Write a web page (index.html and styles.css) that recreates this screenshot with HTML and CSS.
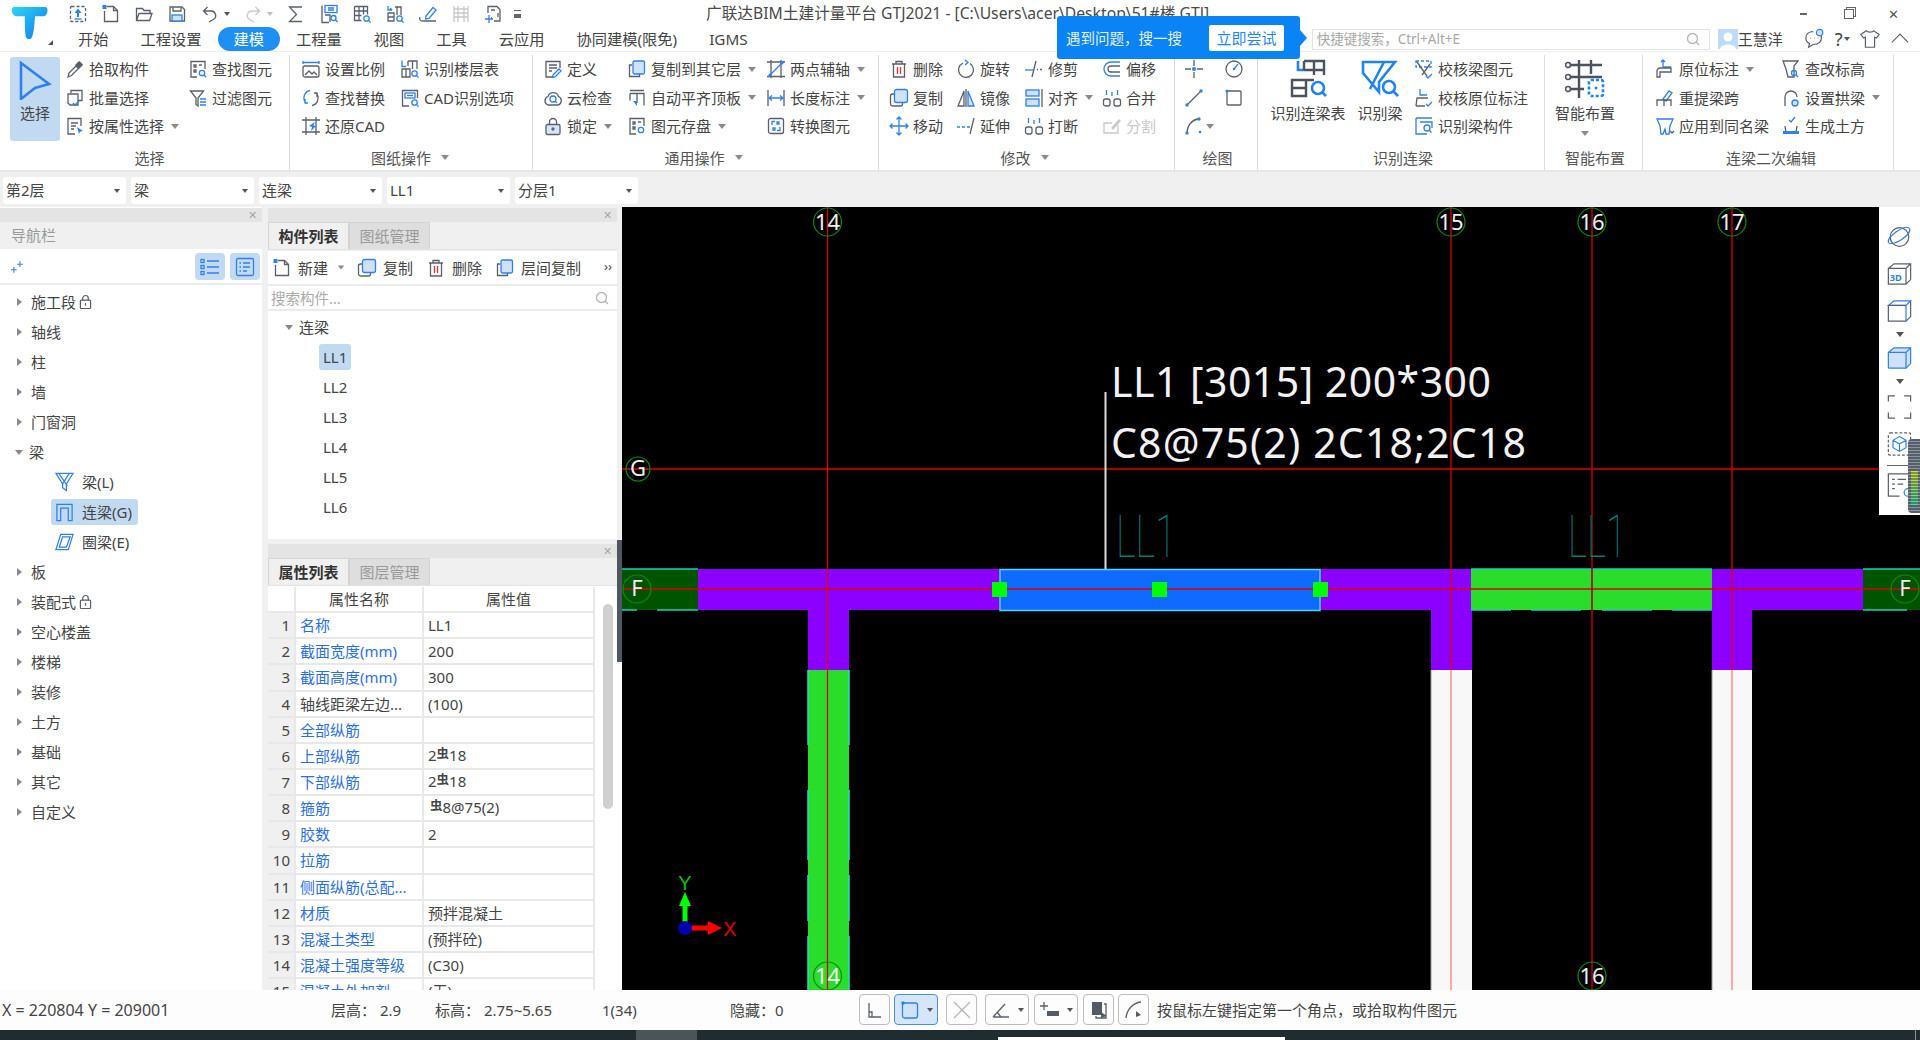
FILE: index.html
```html
<!DOCTYPE html>
<html lang="zh-CN">
<head>
  <meta charset="UTF-8">
  <title>广联达BIM土建计量平台 GTJ2021</title>
  <link rel="stylesheet" href="styles.css">
</head>
<body>
  <!-- shared icons -->
  <svg class="defs" width="0" height="0">
    <defs>
      <linearGradient id="logo-grad" x1="0" y1="0" x2="1" y2="1">
        <stop offset="0" stop-color="#2fd6f0"/>
        <stop offset="1" stop-color="#0a78ee"/>
      </linearGradient>
      <symbol id="up" viewBox="0 0 20 20"><rect class="g dash" x="2.500" y="2.500" width="15" height="15" rx="1"/><path class="bf" d="M10 4.500l3.500 4.500H11v4H9V9H6.500z"/><path class="b" d="M6.500 15h7"/></symbol>
      <symbol id="new" viewBox="0 0 20 20"><path class="g" d="M6 2.500h6.500l4 4v11h-13V7"/><path class="g" d="M12.500 2.500v4h4"/><rect class="bf" x="1.500" y="1" width="4" height="4"/></symbol>
      <symbol id="open" viewBox="0 0 20 20"><path class="g" d="M2.500 16.500v-12h6l1.500 2h6v3M2.500 16.500l2.500-7h13l-2.500 7z"/></symbol>
      <symbol id="save" viewBox="0 0 20 20"><path class="g" d="M3 3h12l2.500 2.500V17H3z"/><path class="g" d="M6 3.500v3.500h8V3.500"/><rect class="f" x="5" y="11" width="10" height="6"/></symbol>
      <symbol id="undo" viewBox="0 0 20 20"><path class="g" d="M7.500 3L3.500 7l4 4M3.500 7h7.500a4.500 4.500 0 0 1 3 8L9 18"/></symbol>
      <symbol id="redo" viewBox="0 0 20 20"><path class="off" d="M12.500 3l4 4-4 4M16.500 7H9a4.500 4.500 0 0 0-3 8l5 3"/></symbol>
      <symbol id="sigma" viewBox="0 0 20 20"><path class="g" d="M16 3H3.500l7 7.500-7 7H16"/></symbol>
      <symbol id="sheet-q" viewBox="0 0 20 20"><path class="g" d="M3 1.500v17h7"/><rect class="b" x="6" y="1.500" width="12" height="7"/><path class="b" d="M9 4h6M9 6h6"/><path class="g" d="M6 11h5v7"/><circle class="b" cx="14.500" cy="14" r="2.500"/><path class="b" d="M16.300 15.800l2.200 2.200"/></symbol>
      <symbol id="grid-q" viewBox="0 0 20 20"><path class="g" d="M2.500 2.500h13v8M2.500 2.500v14h7M2.500 7h13M2.500 11.500h7M7 2.500v14M11.500 2.500v8"/><circle class="b" cx="14.500" cy="14.500" r="2.700"/><path class="b" d="M16.400 16.400l2.200 2.200"/></symbol>
      <symbol id="grid2-q" viewBox="0 0 20 20"><path class="g" d="M10 3h6v8M3 9h6v8H3zM12 3v8M3 13h6"/><path class="b" d="M3 2v4h4M7 6l-2-2"/><circle class="b" cx="14.500" cy="14.500" r="2.700"/><path class="b" d="M16.400 16.400l2.200 2.200"/></symbol>
      <symbol id="pen" viewBox="0 0 20 20"><path class="b" d="M8 12l7-8.500 3 2.500-7 8.500-3.500.5z"/><path class="g" d="M2 13c-1 2 0 4 3 4h13"/></symbol>
      <symbol id="rail" viewBox="0 0 20 20"><path class="off" d="M3 2v16M17 2v16M3 5h14M3 9h14M3 13h14M7 2v16M13 2v16"/></symbol>
      <symbol id="addsel" viewBox="0 0 20 20"><path class="g" d="M4 9V2.500h9l3 3V17h-6"/><path class="g" d="M7 6h4M14 9v4M8 14h-1"/><path class="b" d="M5 11v8M1 15h8"/></symbol>
      <symbol id="pick" viewBox="0 0 20 20"><path class="g" d="M3 18l1-4 7-7 2.500 2.500-7 7z"/><path class="gf" d="M10 6l4-4 1 .5 2.500 2.500.5 1-4 4z"/></symbol>
      <symbol id="batch" viewBox="0 0 20 20"><path class="g" d="M6 5V2.500h11v10h-4"/><path class="g" d="M3 6h10v11H5l-2-2z"/><path class="b" d="M8 15l2 2 4-4"/></symbol>
      <symbol id="attr" viewBox="0 0 20 20"><path class="g" d="M10 18H3V2.500h13V10"/><path class="g" d="M6 7h7M6 10h5M6 13h3"/><path class="bf" d="M12 11l6 4-3 .8L14 18z"/></symbol>
      <symbol id="find" viewBox="0 0 20 20"><path class="g" d="M9 18H3V2.500h14V10"/><path class="g" d="M6 6h2v2H6zM11 6h3M6 11h2v2H6z"/><circle class="b" cx="14" cy="14" r="2.700"/><path class="b" d="M16 16l2.200 2.200"/></symbol>
      <symbol id="filter" viewBox="0 0 20 20"><path class="g" d="M2.500 3h13L10 10v8l-2-1.500V10z"/><path class="b" d="M12 11h6M12 14h6M12 17h6"/></symbol>
      <symbol id="scale" viewBox="0 0 20 20"><path class="b" d="M2 2v3M18 2v3M2 3.500h16"/><rect class="g" x="2" y="7" width="16" height="11" rx="2"/><path class="g" d="M4 16l4-4 3 3 2-2 3 3"/></symbol>
      <symbol id="floors" viewBox="0 0 20 20"><path class="b" d="M2 1.500v6h4"/><path class="g" d="M8 2h9v8M12.500 2v8M8 2v5M2 10h8v8H2zM6 10v8"/><circle class="b" cx="14.500" cy="14.500" r="2.700"/><path class="b" d="M16.400 16.400l2.200 2.200"/></symbol>
      <symbol id="replace" viewBox="0 0 20 20"><path class="b" d="M9 2.500A7.500 7.500 0 0 0 5 15M4 11v4h3"/><path class="g" d="M11 17.500A7.500 7.500 0 0 0 15 5M16 9V5h-3"/></symbol>
      <symbol id="cad" viewBox="0 0 20 20"><path class="g" d="M9 18H2.500V2.500h15V10"/><rect class="b" x="5" y="5" width="10" height="5"/><path class="b" d="M7 7.500h6"/><circle class="b" cx="14.500" cy="14.500" r="2.700"/><path class="b" d="M16.400 16.400l2.200 2.200"/></symbol>
      <symbol id="restore" viewBox="0 0 20 20"><path class="g" d="M5 1v18M15 1v18M1 4h18M1 16h18"/><path class="bf" d="M14 6l-6 4 3 1-1 4 5-5-2.500-.5z"/></symbol>
      <symbol id="define" viewBox="0 0 20 20"><path class="g" d="M9 18H3V2.500h14V9"/><path class="g" d="M6 6h8M6 9h8M6 12h3"/><path class="b" d="M10 16l6-6 2 2-6 6-2.500.5z"/></symbol>
      <symbol id="cloud" viewBox="0 0 20 20"><path class="g" d="M5 17a4.500 4.500 0 0 1 0-8.500A5.500 5.500 0 0 1 15.500 8.500 4.500 4.500 0 0 1 15 17z"/><circle class="b" cx="10" cy="11" r="3"/><path class="b" d="M12 13l2 2"/></symbol>
      <symbol id="lock" viewBox="0 0 20 20"><rect class="lockf" x="3" y="8.500" width="14" height="10" rx="1.500"/><path class="g" d="M6.500 8.500V6a3.500 3.500 0 0 1 7 0v2.500"/><circle class="g" cx="10" cy="13" r="1"/></symbol>
      <symbol id="copy" viewBox="0 0 20 20"><path class="g" d="M5 6H2.500v11.500h10V15"/><rect class="f" x="6" y="2" width="11.500" height="13" rx="1.500"/></symbol>
      <symbol id="align-top" viewBox="0 0 20 20"><path class="g" d="M3 2.500h14M3 5.500h14v12M3 5.500v7M10 6v9"/><path class="bf" d="M6 13l4 5 0-5z"/></symbol>
      <symbol id="store" viewBox="0 0 20 20"><path class="g" d="M9 18H3V2.500h14V10M6 6h2v2H6zM11 6h3M6 11h2v2H6z"/><circle class="b" cx="14" cy="14" r="2.700"/></symbol>
      <symbol id="twopt" viewBox="0 0 20 20"><path class="g" d="M5 1v18M15 1v18M1 17.500h18M1 3h18"/><path class="b" d="M2 18L18 2"/><circle class="bf" cx="4" cy="16" r="1.500"/><circle class="bf" cx="16" cy="4" r="1.500"/></symbol>
      <symbol id="dim" viewBox="0 0 20 20"><path class="g" d="M2 2v16M18 2v16"/><path class="b" d="M3 10h14M6 7.500L3 10l3 2.500M14 7.500l3 2.500-3 2.500"/></symbol>
      <symbol id="convert" viewBox="0 0 20 20"><rect class="g" x="2.500" y="2.500" width="15" height="15" rx="2"/><path class="b" d="M6 9V5.500h3M14 11v3.500h-3M7 12h2v2H7zM11 6h2v2h-2z"/></symbol>
      <symbol id="trash" viewBox="0 0 20 20"><path class="g" d="M3 5h14M7 5V2.500h6V5M4.500 5v13h11V5"/><path class="r" d="M8.500 8v7M11.500 8v7"/></symbol>
      <symbol id="rotate" viewBox="0 0 20 20"><path class="g" d="M7 4a7.500 7.500 0 1 0 7 .5"/><path class="b" d="M9 1l3 2.500L9 6"/></symbol>
      <symbol id="trim" viewBox="0 0 20 20"><path class="b" d="M1 11h9"/><path class="g" d="M12 2L8 18M13 10.500h1M16 10.500h2"/></symbol>
      <symbol id="offset" viewBox="0 0 20 20"><path class="b" d="M18 3H9a7 7 0 0 0 0 14h9"/><path class="g" d="M18 7H9a3 3 0 0 0 0 6h9"/></symbol>
      <symbol id="dup" viewBox="0 0 20 20"><rect class="g" x="1.500" y="6" width="12" height="12" rx="2"/><rect class="f" x="5.500" y="1.500" width="13" height="13" rx="2"/></symbol>
      <symbol id="mirror" viewBox="0 0 20 20"><path class="g" d="M8 3L2 18h6z"/><path class="f" d="M12 3l6 15h-6z"/><path class="g" d="M10 1v18"/></symbol>
      <symbol id="alignr" viewBox="0 0 20 20"><path class="g" d="M18 1v18"/><rect class="f" x="2" y="2" width="13" height="6"/><rect class="f" x="2" y="11" width="13" height="7"/></symbol>
      <symbol id="merge" viewBox="0 0 20 20"><rect class="g" x="1.500" y="11" width="6.500" height="7" rx="2"/><rect class="g" x="12" y="11" width="6.500" height="7" rx="2"/><path class="b" d="M4.500 2v5M15.500 2v5M10 4v4"/></symbol>
      <symbol id="move" viewBox="0 0 20 20"><path class="b" d="M10 1v18M1 10h18M7.500 3.500L10 1l2.500 2.500M7.500 16.500L10 19l2.500-2.500M3.500 7.500L1 10l2.500 2.500M16.500 7.500L19 10l-2.500 2.500"/></symbol>
      <symbol id="extend" viewBox="0 0 20 20"><path class="b" d="M1 11h3M6 11h3M11 11h3"/><path class="g" d="M18 2l-4 16"/></symbol>
      <symbol id="split" viewBox="0 0 20 20"><path class="off" d="M16 9v8H2V7h8M10 12l7-8 1 1-7 8z"/></symbol>
      <symbol id="cross" viewBox="0 0 20 20"><path class="g" d="M10 1v6M10 13v6M1 10h6M13 10h6"/><circle class="bf" cx="10" cy="10" r="2"/></symbol>
      <symbol id="gauge" viewBox="0 0 20 20"><circle class="g" cx="10" cy="10" r="8"/><path class="b" d="M10 10l4-5"/><circle class="bf" cx="10" cy="10" r="1.300"/></symbol>
      <symbol id="line" viewBox="0 0 20 20"><path class="g" d="M3 17L17 3"/><circle class="bf" cx="3" cy="17" r="1.700"/><circle class="bf" cx="17" cy="3" r="1.700"/></symbol>
      <symbol id="rect" viewBox="0 0 20 20"><rect class="g" x="3" y="3" width="14" height="14" rx="1"/><circle class="bf" cx="3" cy="3" r="1.600"/></symbol>
      <symbol id="arc" viewBox="0 0 20 20"><path class="g" d="M3 18C3 9 8 4 14 3"/><circle class="bf" cx="3" cy="17" r="1.700"/><circle class="bf" cx="15" cy="3" r="1.700"/><circle class="bf" cx="16" cy="16" r="1.300"/></symbol>
      <symbol id="beam-chk" viewBox="0 0 20 20"><rect class="b dash" x="2" y="2" width="15" height="6"/><path class="g" d="M3 3l10 14M16 5L8 16"/><path class="b" d="M12 17l2 2 4-4"/></symbol>
      <symbol id="orig-chk" viewBox="0 0 20 20"><path class="b" d="M6 1v6h7"/><path class="g" d="M2 18l1-8h11M2 18h9"/><path class="b" d="M12 16l2 2 4-4"/></symbol>
      <symbol id="beam-id" viewBox="0 0 20 20"><path class="b" d="M2 2h16M2 2v16h11M6 6h12v6"/><circle class="b" cx="13" cy="12" r="3"/><path class="b" d="M15 14l2.500 2.500"/></symbol>
      <symbol id="orig" viewBox="0 0 20 20"><path class="b" d="M8 1v7h8M6 3l2-2 2 2"/><path class="g" d="M2 18V11l2-2h12v4H5v5z"/></symbol>
      <symbol id="elev" viewBox="0 0 20 20"><path class="g" d="M2 2h15l-4 5v11H7L5 10z"/><circle class="b" cx="13" cy="14" r="2.500"/><path class="b" d="M15 16l2 2"/></symbol>
      <symbol id="respan" viewBox="0 0 20 20"><path class="b" d="M8 11l6-8 3 2-6 8z"/><path class="g" d="M2 18v-6h14v6M9 12v6"/></symbol>
      <symbol id="arch" viewBox="0 0 20 20"><path class="g" d="M4 18V9a6 6 0 0 1 12 0"/><circle class="f" cx="14" cy="15" r="3"/></symbol>
      <symbol id="apply" viewBox="0 0 20 20"><path class="b" d="M2 3h16l-3 7-1 8h-3l-1-5-2 5H6L5 10z"/><path class="g" d="M15 15l2 2 2-2"/></symbol>
      <symbol id="earth" viewBox="0 0 20 20"><path class="b" d="M8 4l2 2 4-5"/><path class="g" d="M4 10l1 7h10l1-7"/><path class="bf" d="M2 15h16v3H2z"/></symbol>
      <symbol id="chat" viewBox="0 0 24 24"><path class="g" d="M10 4C5 4 2 7 2 11c0 3 2 5 4 6l-1 4 5-3c6 0 9-3 9-7 0-1 0-2-.500-3"/><circle class="f" cx="17" cy="5" r="3.500"/><path class="g" d="M7 11h.5M11 11h.5M15 11h.5"/></symbol>
      <symbol id="shirt" viewBox="0 0 24 24"><path class="g" d="M8 3l-6 4 3 4 2-1v11h10V10l2 1 3-4-6-4c-1 2-7 2-8 0z"/></symbol>
      <symbol id="search" viewBox="0 0 16 16"><circle class="mute" cx="7.500" cy="7.500" r="5"/><path class="mute" d="M11 11l3 3"/></symbol>
      <symbol id="sparkle" viewBox="0 0 16 16"><path class="b" d="M11 1v7M7.500 4.500h7M3.500 8v7M0 11.500h7"/></symbol>
      <symbol id="list-a" viewBox="0 0 20 20"><path class="b" d="M7 4h12M7 10h12M7 16h12"/><rect class="b" x="1" y="2.500" width="3" height="3"/><rect class="b" x="1" y="8.500" width="3" height="3"/><rect class="b" x="1" y="14.500" width="3" height="3"/></symbol>
      <symbol id="list-b" viewBox="0 0 20 20"><rect class="b" x="1.500" y="1.500" width="17" height="17" rx="1.500"/><path class="b" d="M4.500 6h1.500M8 6h7M4.500 10h1.500M8 10h7M4.500 14h1.500M8 14h4"/></symbol>
      <symbol id="padlock" viewBox="0 0 14 16"><rect class="g" x="1.500" y="6" width="11" height="9" rx="1"/><path class="g" d="M4 6V4a3 3 0 0 1 6 0v2M7 9v3"/></symbol>
      <symbol id="beam-l" viewBox="0 0 20 20"><path class="b" d="M1 1h18l-7 11v7l-4-3v-4zM4 1l9 13M8 12l7-11"/></symbol>
      <symbol id="beam-g" viewBox="0 0 20 20"><path class="b" d="M2 19V2h16v17h-4V6H6v13z"/></symbol>
      <symbol id="beam-e" viewBox="0 0 20 20"><path class="b" d="M6 2h13l-5 16H1zM8 4.500h8L12 15.500H4.500z"/></symbol>
      <symbol id="big-table" viewBox="0 0 40 40"><path class="bold-b" d="M10 2v9h6"/><path class="bold-g" d="M16 2h20v14M26 2v14M16 2v9M16 11h20M4 21h14v16H4zM18 21h8M4 29h14"/><circle class="bold-b" cx="30" cy="29" r="6"/><path class="bold-b" d="M34 33l4 4"/></symbol>
      <symbol id="big-beam" viewBox="0 0 40 40"><path class="bold-b" d="M3 3h32l-16 20v10L3 14zM24 3L10 30"/><circle class="bold-b" cx="29" cy="28" r="6"/><path class="bold-b" d="M33 32l5 5"/></symbol>
      <symbol id="big-smart" viewBox="0 0 40 40"><path class="bold-g" d="M3 6h34M3 18h34M3 30h16M14 1v38M26 1v14"/><circle class="dot" cx="3" cy="6" r="2.500"/><circle class="dot" cx="3" cy="18" r="2.500"/><circle class="dot" cx="3" cy="30" r="2.500"/><rect class="bold-b dash" x="24" y="21" width="14" height="16" rx="2"/><circle class="bf" cx="31" cy="29" r="1.500"/></symbol>
      <symbol id="big-select" viewBox="0 0 40 40"><path class="arrow" d="M6 3l28 21-14 4-14 11z"/></symbol>
      <symbol id="v-orbit" viewBox="0 0 28 28"><circle class="g" cx="14" cy="14" r="10"/><path class="b" d="M2 20c-1-3 3-8 9-12s12-6 14-3"/><path class="b" d="M2 20c2 2 8 1 14-3s10-9 9-12"/></symbol>
      <symbol id="v-3d" viewBox="0 0 28 28"><path class="g" d="M2 8l6-5h18v17l-5 5H2zM2 8h19v17M21 8l5-5"/><text class="v-3d-text" x="3.500" y="22">3D</text></symbol>
      <symbol id="v-cube" viewBox="0 0 28 28"><path class="g" d="M2 8v17h19l5-5V3"/><path class="b" d="M2 8l6-5h18l-5 5zM21 8v17"/><path class="g" d="M2 8h19"/></symbol>
      <symbol id="v-cubef" viewBox="0 0 28 28"><path class="f" d="M2 8l6-5h18v17l-5 5H3a1 1 0 0 1-1-1z"/><path class="b" d="M2 8h19v17M21 8l5-5"/></symbol>
      <symbol id="v-full" viewBox="0 0 28 28"><path class="g" d="M2 8V2h7M19 2h7v6M26 20v6h-7M9 26H2v-6"/></symbol>
      <symbol id="v-box" viewBox="0 0 28 28"><rect class="g dash" x="2" y="2" width="24" height="24" rx="2"/><path class="b" d="M14 6l7 4v8l-7 4-7-4v-8zM7 10l7 4 7-4M14 14v8"/></symbol>
      <symbol id="v-note" viewBox="0 0 28 28"><path class="g" d="M14 26H2V2h24v14M6 8h3M12 8h9M6 13h3M12 13h6M6 18h3"/><circle class="b" cx="23" cy="22" r="4"/></symbol>
      <symbol id="s-ortho" viewBox="0 0 20 20"><path class="g" d="M4 3v14h12M4 12h3v5"/></symbol>
      <symbol id="s-rect" viewBox="0 0 20 20"><rect class="f" x="2.500" y="3" width="15" height="15" rx="2"/><circle class="bf" cx="3" cy="3" r="1.800"/></symbol>
      <symbol id="s-x" viewBox="0 0 20 20"><path class="mute" d="M2 2l16 16M18 2L2 18"/></symbol>
      <symbol id="s-angle" viewBox="0 0 20 20"><path class="g" d="M2 17h16M2 17L14 4M6 12l4 5"/></symbol>
      <symbol id="s-track" viewBox="0 0 20 20"><path class="g" d="M4 2v8M0 6h8"/><rect class="dark" x="7" y="11" width="12" height="5"/></symbol>
      <symbol id="s-layer" viewBox="0 0 20 20"><rect class="dark" x="3" y="2" width="10" height="13"/><path class="g" d="M15 4h2v14H7v-2"/><path class="dark" d="M12 12l6 4-6 2z"/></symbol>
      <symbol id="s-arc" viewBox="0 0 20 20"><path class="g" d="M2 18C3 9 9 3 17 2"/><path class="dark" d="M12 11l5 4-5 2z"/></symbol>
    </defs>
  </svg>

  <div class="app">
    <!-- Title + tabs -->
    <div class="header">
      <div class="logo-box">
        <svg class="logo" viewBox="0 0 40 38"><path fill="url(#logo-grad)" d="M3 2h34c3 0 3 9-2 10H26c-1 8-1 15-3 21-1 4-6 4-7 0-1-6-1-14-1-21H6C1 11 0 3 3 2z"/></svg>
        <i class="logo-corner"></i>
      </div>
      <div class="header-main">
        <div class="top-row">
          <svg class="qa"><use href="#up"/></svg>
          <svg class="qa"><use href="#new"/></svg>
          <svg class="qa"><use href="#open"/></svg>
          <svg class="qa"><use href="#save"/></svg>
          <svg class="qa"><use href="#undo"/></svg><i class="qa-caret"></i>
          <svg class="qa"><use href="#redo"/></svg><i class="qa-caret off-caret"></i>
          <svg class="qa"><use href="#sigma"/></svg>
          <svg class="qa"><use href="#sheet-q"/></svg>
          <svg class="qa"><use href="#grid-q"/></svg>
          <svg class="qa"><use href="#grid2-q"/></svg>
          <svg class="qa"><use href="#pen"/></svg>
          <svg class="qa"><use href="#rail"/></svg>
          <svg class="qa"><use href="#addsel"/></svg>
          <span class="qa-more"></span>
          <div class="app-title">广联达BIM土建计量平台 GTJ2021 - [C:\Users\acer\Desktop\51#楼.GTJ]</div>
          <div class="win-btns">
            <span class="win-btn"><i class="win-min"></i></span>
            <span class="win-btn"><i class="win-max"></i></span>
            <span class="win-btn win-close">✕</span>
          </div>
        </div>
        <div class="tab-row">
          <div class="tab">开始</div>
          <div class="tab">工程设置</div>
          <div class="tab active">建模</div>
          <div class="tab">工程量</div>
          <div class="tab">视图</div>
          <div class="tab">工具</div>
          <div class="tab">云应用</div>
          <div class="tab">协同建模(限免)</div>
          <div class="tab">IGMS</div>
          <div class="quick-search">
            <span>快捷键搜索，Ctrl+Alt+E</span>
            <svg class="qs-icon"><use href="#search"/></svg>
          </div>
          <div class="user">
            <svg class="avatar" viewBox="0 0 20 20"><rect width="20" height="20" fill="#bcdcf8"/><circle cx="10" cy="8" r="4.500" fill="#fff"/><path d="M2 20c1-6 15-6 16 0z" fill="#fff"/></svg>
            王慧洋
          </div>
          <svg class="head-ic"><use href="#chat"/></svg>
          <span class="help">?<i class="help-caret"></i></span>
          <svg class="head-ic"><use href="#shirt"/></svg>
          <i class="collapse"></i>
        </div>
      </div>
    </div>

    <div class="tip-bubble">
      <span>遇到问题，搜一搜</span>
      <span class="tip-btn">立即尝试</span>
    </div>

    <!-- Ribbon -->
    <div class="ribbon">
      <div class="rb-group g1">
        <div class="rb-body">
          <div class="big-btn select-btn"><svg class="ic-big"><use href="#big-select"/></svg>选择</div>
          <div class="rb-col c2">
            <div class="rb-item"><svg class="ic"><use href="#pick"/></svg>拾取构件</div>
            <div class="rb-item"><svg class="ic"><use href="#batch"/></svg>批量选择</div>
            <div class="rb-item"><svg class="ic"><use href="#attr"/></svg>按属性选择<i class="caret"></i></div>
          </div>
          <div class="rb-col">
            <div class="rb-item"><svg class="ic"><use href="#find"/></svg>查找图元</div>
            <div class="rb-item"><svg class="ic"><use href="#filter"/></svg>过滤图元</div>
          </div>
        </div>
        <div class="rb-label">选择</div>
      </div>

      <div class="rb-group g2">
        <div class="rb-body">
          <div class="rb-col c99">
            <div class="rb-item"><svg class="ic"><use href="#scale"/></svg>设置比例</div>
            <div class="rb-item"><svg class="ic"><use href="#replace"/></svg>查找替换</div>
            <div class="rb-item"><svg class="ic"><use href="#restore"/></svg>还原CAD</div>
          </div>
          <div class="rb-col">
            <div class="rb-item"><svg class="ic"><use href="#floors"/></svg>识别楼层表</div>
            <div class="rb-item"><svg class="ic"><use href="#cad"/></svg>CAD识别选项</div>
          </div>
        </div>
        <div class="rb-label">图纸操作<i class="caret"></i></div>
      </div>

      <div class="rb-group g3">
        <div class="rb-body">
          <div class="rb-col c84">
            <div class="rb-item"><svg class="ic"><use href="#define"/></svg>定义</div>
            <div class="rb-item"><svg class="ic"><use href="#cloud"/></svg>云检查</div>
            <div class="rb-item"><svg class="ic"><use href="#lock"/></svg>锁定<i class="caret"></i></div>
          </div>
          <div class="rb-col c139">
            <div class="rb-item"><svg class="ic"><use href="#copy"/></svg>复制到其它层<i class="caret"></i></div>
            <div class="rb-item"><svg class="ic"><use href="#align-top"/></svg>自动平齐顶板<i class="caret"></i></div>
            <div class="rb-item"><svg class="ic"><use href="#store"/></svg>图元存盘<i class="caret"></i></div>
          </div>
          <div class="rb-col">
            <div class="rb-item"><svg class="ic"><use href="#twopt"/></svg>两点辅轴<i class="caret"></i></div>
            <div class="rb-item"><svg class="ic"><use href="#dim"/></svg>长度标注<i class="caret"></i></div>
            <div class="rb-item"><svg class="ic"><use href="#convert"/></svg>转换图元</div>
          </div>
        </div>
        <div class="rb-label">通用操作<i class="caret"></i></div>
      </div>

      <div class="rb-group g4">
        <div class="rb-body">
          <div class="rb-col c67">
            <div class="rb-item"><svg class="ic"><use href="#trash"/></svg>删除</div>
            <div class="rb-item"><svg class="ic"><use href="#dup"/></svg>复制</div>
            <div class="rb-item"><svg class="ic"><use href="#move"/></svg>移动</div>
          </div>
          <div class="rb-col c68">
            <div class="rb-item"><svg class="ic"><use href="#rotate"/></svg>旋转</div>
            <div class="rb-item"><svg class="ic"><use href="#mirror"/></svg>镜像</div>
            <div class="rb-item"><svg class="ic"><use href="#extend"/></svg>延伸</div>
          </div>
          <div class="rb-col c78">
            <div class="rb-item"><svg class="ic"><use href="#trim"/></svg>修剪</div>
            <div class="rb-item"><svg class="ic"><use href="#alignr"/></svg>对齐<i class="caret"></i></div>
            <div class="rb-item"><svg class="ic"><use href="#merge"/></svg>打断</div>
          </div>
          <div class="rb-col">
            <div class="rb-item"><svg class="ic"><use href="#offset"/></svg>偏移</div>
            <div class="rb-item"><svg class="ic"><use href="#merge"/></svg>合并</div>
            <div class="rb-item disabled"><svg class="ic"><use href="#split"/></svg>分割</div>
          </div>
        </div>
        <div class="rb-label">修改<i class="caret"></i></div>
      </div>

      <div class="rb-group g5">
        <div class="rb-body">
          <div class="rb-col c40">
            <div class="rb-item"><svg class="ic"><use href="#cross"/></svg></div>
            <div class="rb-item"><svg class="ic"><use href="#line"/></svg></div>
            <div class="rb-item"><svg class="ic"><use href="#arc"/></svg><i class="caret arc-caret"></i></div>
          </div>
          <div class="rb-col">
            <div class="rb-item"><svg class="ic"><use href="#gauge"/></svg></div>
            <div class="rb-item"><svg class="ic"><use href="#rect"/></svg></div>
          </div>
        </div>
        <div class="rb-label">绘图</div>
      </div>

      <div class="rb-group g6">
        <div class="rb-body">
          <div class="big-btn w76"><svg class="ic-big"><use href="#big-table"/></svg>识别连梁表</div>
          <div class="big-btn w68"><svg class="ic-big"><use href="#big-beam"/></svg>识别梁</div>
          <div class="rb-col">
            <div class="rb-item"><svg class="ic"><use href="#beam-chk"/></svg>校核梁图元</div>
            <div class="rb-item"><svg class="ic"><use href="#orig-chk"/></svg>校核原位标注</div>
            <div class="rb-item"><svg class="ic"><use href="#beam-id"/></svg>识别梁构件</div>
          </div>
        </div>
        <div class="rb-label">识别连梁</div>
      </div>

      <div class="rb-group g7">
        <div class="rb-body">
          <div class="big-btn w80"><svg class="ic-big"><use href="#big-smart"/></svg>智能布置<i class="caret big-caret"></i></div>
        </div>
        <div class="rb-label">智能布置</div>
      </div>

      <div class="rb-group g8">
        <div class="rb-body">
          <div class="rb-col c126">
            <div class="rb-item"><svg class="ic"><use href="#orig"/></svg>原位标注<i class="caret"></i></div>
            <div class="rb-item"><svg class="ic"><use href="#respan"/></svg>重提梁跨</div>
            <div class="rb-item"><svg class="ic"><use href="#apply"/></svg>应用到同名梁</div>
          </div>
          <div class="rb-col">
            <div class="rb-item"><svg class="ic"><use href="#elev"/></svg>查改标高</div>
            <div class="rb-item"><svg class="ic"><use href="#arch"/></svg>设置拱梁<i class="caret"></i></div>
            <div class="rb-item"><svg class="ic"><use href="#earth"/></svg>生成土方</div>
          </div>
        </div>
        <div class="rb-label">连梁二次编辑</div>
      </div>
    </div>

    <!-- Combo row -->
    <div class="combo-row">
      <div class="combo">第2层</div>
      <div class="combo">梁</div>
      <div class="combo">连梁</div>
      <div class="combo">LL1</div>
      <div class="combo">分层1</div>
    </div>

    <div class="workspace">
      <!-- Navigation -->
      <div class="nav-panel">
        <div class="panel-strip"><span class="panel-x">✕</span></div>
        <div class="nav-title">导航栏</div>
        <div class="nav-tools">
          <svg class="sparkle"><use href="#sparkle"/></svg>
          <span class="nav-tool"><svg><use href="#list-a"/></svg></span>
          <span class="nav-tool"><svg><use href="#list-b"/></svg></span>
        </div>
        <ul class="nav-tree">
          <li class="nav-node"><i class="tri"></i>施工段<svg class="padlock"><use href="#padlock"/></svg></li>
          <li class="nav-node"><i class="tri"></i>轴线</li>
          <li class="nav-node"><i class="tri"></i>柱</li>
          <li class="nav-node"><i class="tri"></i>墙</li>
          <li class="nav-node"><i class="tri"></i>门窗洞</li>
          <li class="nav-node"><i class="tri-open"></i>梁</li>
          <li class="nav-leaf"><svg><use href="#beam-l"/></svg>梁(L)</li>
          <li class="nav-leaf selected"><svg><use href="#beam-g"/></svg>连梁(G)</li>
          <li class="nav-leaf"><svg><use href="#beam-e"/></svg>圈梁(E)</li>
          <li class="nav-node"><i class="tri"></i>板</li>
          <li class="nav-node"><i class="tri"></i>装配式<svg class="padlock"><use href="#padlock"/></svg></li>
          <li class="nav-node"><i class="tri"></i>空心楼盖</li>
          <li class="nav-node"><i class="tri"></i>楼梯</li>
          <li class="nav-node"><i class="tri"></i>装修</li>
          <li class="nav-node"><i class="tri"></i>土方</li>
          <li class="nav-node"><i class="tri"></i>基础</li>
          <li class="nav-node"><i class="tri"></i>其它</li>
          <li class="nav-node"><i class="tri"></i>自定义</li>
        </ul>
      </div>

      <!-- Component list + properties -->
      <div class="mid-panel">
        <div class="list-panel">
          <div class="panel-strip"><span class="panel-x">✕</span></div>
          <div class="panel-tabs">
            <div class="panel-tab active">构件列表</div>
            <div class="panel-tab">图纸管理</div>
          </div>
          <div class="list-tools">
            <svg class="ic"><use href="#new"/></svg><span class="tool-text">新建</span><i class="caret tool-caret"></i>
            <svg class="ic"><use href="#dup"/></svg><span class="tool-text">复制</span>
            <svg class="ic"><use href="#trash"/></svg><span class="tool-text">删除</span>
            <svg class="ic"><use href="#copy"/></svg><span class="tool-text">层间复制</span>
            <span class="tool-more">››</span>
          </div>
          <div class="list-search">
            <span>搜索构件...</span>
            <svg class="qs-icon"><use href="#search"/></svg>
          </div>
          <div class="list-tree">
            <div class="list-root"><i class="tri-open"></i>连梁</div>
            <div class="list-item"><span class="on">LL1</span></div>
            <div class="list-item"><span>LL2</span></div>
            <div class="list-item"><span>LL3</span></div>
            <div class="list-item"><span>LL4</span></div>
            <div class="list-item"><span>LL5</span></div>
            <div class="list-item"><span>LL6</span></div>
          </div>
        </div>

        <div class="prop-panel">
          <div class="panel-strip"><span class="panel-x">✕</span></div>
          <div class="panel-tabs">
            <div class="panel-tab active">属性列表</div>
            <div class="panel-tab">图层管理</div>
          </div>
          <div class="prop-body">
            <table class="prop-table">
              <thead>
                <tr><th class="num"></th><th class="name">属性名称</th><th class="val">属性值</th></tr>
              </thead>
              <tbody>
                <tr><td class="num">1</td><td class="link">名称</td><td>LL1</td></tr>
                <tr><td class="num">2</td><td class="link">截面宽度(mm)</td><td>200</td></tr>
                <tr><td class="num">3</td><td class="link">截面高度(mm)</td><td>300</td></tr>
                <tr><td class="num">4</td><td>轴线距梁左边...</td><td>(100)</td></tr>
                <tr><td class="num">5</td><td class="link">全部纵筋</td><td></td></tr>
                <tr><td class="num">6</td><td class="link">上部纵筋</td><td>2<span class="rebar">虫</span>18</td></tr>
                <tr><td class="num">7</td><td class="link">下部纵筋</td><td>2<span class="rebar">虫</span>18</td></tr>
                <tr><td class="num">8</td><td class="link">箍筋</td><td><span class="rebar first">虫</span>8@75(2)</td></tr>
                <tr><td class="num">9</td><td class="link">胶数</td><td>2</td></tr>
                <tr><td class="num">10</td><td class="link">拉筋</td><td></td></tr>
                <tr><td class="num">11</td><td class="link">侧面纵筋(总配...</td><td></td></tr>
                <tr><td class="num">12</td><td class="link">材质</td><td>预拌混凝土</td></tr>
                <tr><td class="num">13</td><td class="link">混凝土类型</td><td>(预拌砼)</td></tr>
                <tr><td class="num">14</td><td class="link">混凝土强度等级</td><td>(C30)</td></tr>
                <tr><td class="num">15</td><td class="link">混凝土外加剂</td><td>(无)</td></tr>
              </tbody>
            </table>
            <div class="prop-scroll"><div class="prop-thumb"></div></div>
          </div>
        </div>
      </div>

      <div class="splitter"><div class="splitter-grip"></div></div>

      <!-- Drawing canvas -->
      <div class="canvas">
        <svg class="drawing" viewBox="622 207 1298 784">
          <rect x="622" y="207" width="1298" height="784" fill="#000"/>
          <!-- columns below the beam -->
          <rect x="808" y="670" width="41" height="321" fill="#2bdd2b"/>
          <path d="M808 670V745M808 790V860M808 875V921M808 936V991M849 670V745M849 790V860M849 875V921M849 936V991" stroke="#22e0d0" stroke-width="1.500"/>
          <rect x="1431" y="670" width="41" height="321" fill="#f8f8f8"/>
          <rect x="1712" y="670" width="40" height="321" fill="#f8f8f8"/>
          <path d="M1431 670V991M1712 670V991" stroke="#999" stroke-width="1"/>
          <!-- beam -->
          <path d="M698 569H1999V610H1752V670H1712V610H1472V670H1431V610H849V670H808V610H698Z" fill="#8c00ff"/>
          <rect x="622" y="569" width="76" height="41" fill="#005400"/>
          <rect x="1863" y="569" width="57" height="41" fill="#005400"/>
          <rect x="1471" y="569" width="241" height="41" fill="#2bdd2b"/>
          <path d="M622 569H698M622 610H637M657 610H698M1863 569H1920M1863 610H1907M1471 569H1712M1471 610H1511M1531 610H1581M1602 610H1652M1672 610H1712" stroke="#18d0c0" stroke-width="1.500"/>
          <rect x="1000" y="569.500" width="320" height="41" fill="#0f6bff" stroke="#45d8ff" stroke-width="1.500"/>
          <!-- axis lines -->
          <g stroke="#dd0000" stroke-width="1.300">
            <path d="M622 589H1920"/>
            <path d="M622 469H1879"/>
            <path d="M827.500 207V991"/>
            <path d="M1451 207V670"/>
            <path d="M1732 207V670"/>
            <path d="M1592 207V991" stroke="#b00000" stroke-width="1.600"/>
          </g>
          <path d="M1451 670V991M1732 670V991" stroke="#ff8c8c" stroke-width="1.500"/>
          <!-- grips -->
          <rect x="992" y="582" width="15" height="15" fill="#00ff00"/>
          <rect x="1152" y="582" width="15" height="15" fill="#00ff00"/>
          <rect x="1313" y="582" width="15" height="15" fill="#00ff00"/>
          <!-- axis bubbles -->
          <g class="bubbles">
            <circle cx="827.500" cy="222" r="14"/><text x="827.500" y="230">14</text>
            <circle cx="1451" cy="222" r="14"/><text x="1451" y="230">15</text>
            <circle cx="1592" cy="222" r="14"/><text x="1592" y="230">16</text>
            <circle cx="1732" cy="222" r="14"/><text x="1732" y="230">17</text>
            <circle cx="638" cy="469" r="12"/><text x="638" y="476">G</text>
            <circle cx="637" cy="589" r="14"/><text x="637" y="596">F</text>
            <circle cx="1905" cy="589" r="14"/><text x="1905" y="596">F</text>
            <circle cx="827.500" cy="976" r="14"/><text x="827.500" y="984">14</text>
            <circle cx="1592" cy="976" r="14"/><text x="1592" y="984">16</text>
          </g>
          <!-- labels -->
          <path d="M1105.500 392V569" stroke="#ddd" stroke-width="2"/>
          <text class="beam-note" x="1111" y="397" textLength="380">LL1 [3015] 200*300</text>
          <text class="beam-note" x="1111" y="458" textLength="415">C8@75(2) 2C18;2C18</text>
          <text class="beam-ghost" x="1116" y="557" textLength="60" lengthAdjust="spacingAndGlyphs">LL1</text>
          <text class="beam-ghost" x="1568" y="557" textLength="58" lengthAdjust="spacingAndGlyphs">LL1</text>
          <!-- coordinate axes -->
          <path d="M685 928V903" stroke="#00ff00" stroke-width="5"/>
          <path d="M679 906L685 892L691 906Z" fill="#00ff00"/>
          <path d="M685 928H710" stroke="#ff0000" stroke-width="5"/>
          <path d="M708 921L722 928L708 935Z" fill="#ff0000"/>
          <circle cx="685" cy="928" r="7" fill="#0000b0"/>
          <text class="axis-y" x="685" y="890">Y</text>
          <text class="axis-x" x="730" y="936">X</text>
        </svg>

        <div class="view-tools">
          <svg class="view-ic"><use href="#v-orbit"/></svg>
          <svg class="view-ic"><use href="#v-3d"/></svg>
          <svg class="view-ic"><use href="#v-cube"/></svg>
          <i class="view-caret"></i>
          <svg class="view-ic"><use href="#v-cubef"/></svg>
          <i class="view-caret second"></i>
          <svg class="view-ic"><use href="#v-full"/></svg>
          <svg class="view-ic"><use href="#v-box"/></svg>
          <div class="view-sep"></div>
          <svg class="view-ic"><use href="#v-note"/></svg>
        </div>
        <div class="view-scale"></div>
      </div>
    </div>

    <!-- Status bar -->
    <div class="status-bar">
      <span class="st-pos">X = 220804 Y = 209001</span>
      <span class="st-floor">层高：&nbsp;2.9</span>
      <span class="st-elev">标高：&nbsp;2.75~5.65</span>
      <span class="st-count">1(34)</span>
      <span class="st-hide">隐藏：0</span>
      <span class="st-btn"><svg><use href="#s-ortho"/></svg></span>
      <span class="st-btn wide on"><svg><use href="#s-rect"/></svg><i class="st-caret"></i></span>
      <span class="st-btn dim"><svg><use href="#s-x"/></svg></span>
      <span class="st-btn wide"><svg><use href="#s-angle"/></svg><i class="st-caret"></i></span>
      <span class="st-btn wide"><svg><use href="#s-track"/></svg><i class="st-caret"></i></span>
      <span class="st-btn"><svg><use href="#s-layer"/></svg></span>
      <span class="st-btn"><svg><use href="#s-arc"/></svg></span>
      <span class="st-msg">按鼠标左键指定第一个角点，或拾取构件图元</span>
    </div>

    <!-- Bottom of the desktop taskbar -->
    <div class="taskbar">
      <div class="task-active"></div>
      <div class="task-white"></div>
      <div class="task-time">21:05</div>
      <div class="task-edge"></div>
    </div>
  </div>
</body>
</html>
```

FILE: styles.css
```css
body, html {
  margin: 0;
  padding: 0;
  height: 100%;
  overflow: hidden;
  background: #fff;
}

body {
  font-family: "Noto Sans", "Noto Sans CJK SC", sans-serif;
  font-size: 15px;
  line-height: 20px;
  color: #454545;
}

ul {
  list-style: none;
  margin: 0;
  padding: 0;
}

.defs {
  position: absolute;
}

.app {
  position: relative;
  width: 1920px;
  height: 1040px;
  display: flex;
  flex-direction: column;
  overflow: hidden;
}

/* icon strokes */
.g { fill: none; stroke: #59606c; stroke-width: 1.3; }
.b { fill: none; stroke: #2f80ed; stroke-width: 1.3; }
.r { fill: none; stroke: #e5322d; stroke-width: 1.3; }
.f { fill: #cfe2fa; stroke: #2f80ed; stroke-width: 1.3; }
.bf { fill: #2f80ed; stroke: none; }
.gf { fill: #59606c; stroke: none; }
.off { fill: none; stroke: #c9c9c9; stroke-width: 1.3; }
.mute { fill: none; stroke: #b5b5b5; stroke-width: 1.3; }
.dash { stroke-dasharray: 3 2; }
.dark { fill: #555b66; stroke: none; }
.dot { fill: #fff; stroke: #4b5260; stroke-width: 1.5; }
.lockf { fill: #d6e6fa; stroke: #59606c; stroke-width: 1.3; }
.bold-g { fill: none; stroke: #4b5260; stroke-width: 2.4; }
.bold-b { fill: none; stroke: #1f84ec; stroke-width: 2.6; }
.arrow { fill: #c2d9f2; stroke: #2f80ed; stroke-width: 2.6; }
.v-3d-text { fill: #2f80ed; font-size: 10px; font-weight: bold; }

/* Header */
.header {
  display: flex;
  height: 51px;
  flex: none;
}

.logo-box {
  position: relative;
  width: 62px;
  flex: none;
}

.logo {
  position: absolute;
  left: 10px;
  top: 5px;
  width: 39px;
  height: 36px;
}

.logo-corner {
  position: absolute;
  left: 48px;
  top: 40px;
  border-left: 5px solid transparent;
  border-bottom: 5px solid #555;
}

.header-main {
  flex: 1;
  min-width: 0;
}

.top-row {
  height: 27px;
  display: flex;
  align-items: center;
  gap: 13px;
  padding-left: 6px;
}

.qa {
  width: 20px;
  height: 20px;
  flex: none;
}

.qa-caret {
  width: 6px;
  height: 0;
  margin-left: -9px;
  box-sizing: border-box;
  border-left: 3px solid transparent;
  border-right: 3px solid transparent;
  border-top: 4px solid #555;
}

.off-caret {
  border-top-color: #bbb;
}

.qa-more {
  width: 7px;
  height: 8px;
  margin-left: -3px;
  border-top: 1px solid #666;
  border-bottom: 4px solid #666;
  box-sizing: border-box;
}

.app-title {
  margin-left: 172px;
  font-size: 15.700px;
  white-space: nowrap;
  color: #4a4a4a;
  position: relative;
  top: -1px;
}

.win-btns {
  margin-left: auto;
  display: flex;
  margin-right: 4px;
}

.win-btn {
  width: 45px;
  height: 24px;
  display: flex;
  align-items: center;
  justify-content: center;
  font-size: 13px;
  color: #555;
}

.win-min {
  width: 7px;
  height: 2px;
  background: #666;
}

.win-max {
  width: 8px;
  height: 8px;
  border: 1px solid #666;
  box-shadow: 2px -2px 0 -1px #fff, 2px -2px 0 0 #666;
}

.tab-row {
  height: 24px;
  display: flex;
  align-items: center;
}

.tab {
  padding: 0 16px;
  height: 24px;
  line-height: 24px;
  border-radius: 12px;
  white-space: nowrap;
  font-size: 15.250px;
}

.tab.active {
  background: #1e90f5;
  color: #fff;
}

.quick-search {
  margin-left: 548px;
  width: 398px;
  height: 21px;
  flex: none;
  box-sizing: border-box;
  border: 1px solid #e3e3e3;
  padding: 0 8px 0 4px;
  display: flex;
  align-items: center;
  justify-content: space-between;
  font-size: 13.500px;
  color: #a8a8a8;
}

.qs-icon {
  width: 16px;
  height: 16px;
}

.user {
  display: flex;
  align-items: center;
  margin-left: 8px;
  width: 86px;
  flex: none;
}

.avatar {
  width: 20px;
  height: 20px;
  flex: none;
}

.head-ic {
  width: 22px;
  height: 22px;
  flex: none;
}

.help {
  margin-left: 9px;
  width: 24px;
  font-size: 18px;
  display: flex;
  align-items: center;
}

.help-caret {
  margin-left: 2px;
  border-left: 3px solid transparent;
  border-right: 3px solid transparent;
  border-top: 4px solid #555;
}

.collapse {
  width: 11px;
  height: 11px;
  margin-left: 13px;
  margin-top: 6px;
  border-left: 1.500px solid #555;
  border-top: 1.500px solid #555;
  transform: rotate(45deg);
}

.tip-bubble {
  position: absolute;
  left: 1057px;
  top: 16px;
  width: 243px;
  height: 43px;
  box-sizing: border-box;
  padding-left: 9px;
  background: #0a84f5;
  border-radius: 3px;
  display: flex;
  align-items: center;
  color: #e8f3ff;
  font-size: 14.500px;
  z-index: 5;
}

.tip-bubble:after {
  content: "";
  position: absolute;
  right: -7px;
  top: 14px;
  border-left: 7px solid #0a84f5;
  border-top: 8px solid transparent;
  border-bottom: 8px solid transparent;
}

.tip-btn {
  margin-left: 27px;
  width: 75px;
  height: 26px;
  line-height: 26px;
  text-align: center;
  background: #fff;
  color: #1e88ee;
  border-radius: 2px;
  white-space: nowrap;
  font-size: 15px;
}

/* Ribbon */
.ribbon {
  height: 121px;
  flex: none;
  display: flex;
  padding-top: 3px;
  box-sizing: border-box;
  border-top: 1px solid #f0f0f0;
  border-bottom: 2px solid #e6e6e6;
}

.rb-group {
  height: 115px;
  box-sizing: border-box;
  border-right: 1px solid #dcdcdc;
  display: flex;
  flex-direction: column;
  flex: none;
}

.rb-body {
  height: 91px;
  display: flex;
}

.g1 { width: 290px; padding-left: 10px; }
.g2 { width: 243px; padding-left: 11px; }
.g3 { width: 346px; padding-left: 10px; }
.g4 { width: 296px; padding-left: 10px; }
.g5 { width: 83px; padding-left: 9px; }
.g6 { width: 287px; padding-left: 12px; }
.g7 { width: 98px; padding-left: 0; }
.g8 { width: 251px; padding-left: 12px; }

.g2 .rb-label { margin-left: -13px; }
.g3 .rb-label { margin-left: -14px; }
.g4 .rb-label { margin-left: -14px; }
.g5 .rb-label { margin-left: -6px; }
.g6 .rb-label { margin-left: -8px; }
.g7 .rb-label { margin-left: 3px; }
.g8 .rb-label { margin-left: -6px; }

.rb-col {
  display: flex;
  flex-direction: column;
}

.c2 { width: 123px; margin-left: 5px; }
.c99 { width: 99px; }
.c84 { width: 84px; }
.c139 { width: 139px; }
.c67 { width: 67px; }
.c68 { width: 68px; }
.c78 { width: 78px; }
.c40 { width: 40px; }
.c126 { width: 126px; }

.rb-item {
  height: 28.500px;
  display: flex;
  align-items: center;
  white-space: nowrap;
}

.rb-item.disabled {
  color: #c8c8c8;
}

.ic {
  width: 20px;
  height: 20px;
  margin-right: 4px;
  flex: none;
}

.caret {
  display: inline-block;
  margin-left: 7px;
  border-left: 4px solid transparent;
  border-right: 4px solid transparent;
  border-top: 5px solid #8a8a8a;
}

.arc-caret {
  margin-left: -2px;
}

.rb-label {
  height: 23px;
  display: flex;
  align-items: center;
  justify-content: center;
  color: #555;
}

.rb-label .caret {
  margin-left: 10px;
}

.big-btn {
  display: flex;
  flex-direction: column;
  align-items: center;
  white-space: nowrap;
  text-align: center;
  flex: none;
}

.ic-big {
  width: 40px;
  height: 40px;
  margin: 4px 0 4px;
}

.select-btn {
  width: 50px;
  height: 84px;
  margin-top: 2px;
  background: #c2d9f2;
  border-radius: 3px;
}

.select-btn .ic-big {
  margin: 3px 0 3px;
}

.w76 { width: 76px; }
.w68 { width: 68px; }
.w80 { width: 80px; }

.big-caret {
  margin: 8px 0 0;
}

/* Combo row */
.combo-row {
  height: 35px;
  flex: none;
  background: #f0f0f0;
  display: flex;
  gap: 5px;
  padding: 5px 0 3px 3px;
  box-sizing: border-box;
}

.combo {
  position: relative;
  width: 123px;
  height: 27px;
  line-height: 27px;
  box-sizing: border-box;
  padding-left: 3px;
  background: #fff;
  border-radius: 3px;
}

.combo:after {
  content: "";
  position: absolute;
  right: 6px;
  top: 12px;
  border-left: 3.500px solid transparent;
  border-right: 3.500px solid transparent;
  border-top: 4px solid #555;
}

/* Workspace */
.workspace {
  height: 784px;
  flex: none;
  display: flex;
  background: #f0f0f0;
}

.panel-strip {
  height: 14px;
  margin-top: 1px;
  background: #e4e4e4;
  position: relative;
  flex: none;
}

.panel-x {
  position: absolute;
  right: 5px;
  top: -3px;
  font-size: 11px;
  color: #a5a5a5;
}

.nav-panel {
  width: 262px;
  flex: none;
  background: #fff;
}

.nav-title {
  height: 27px;
  line-height: 27px;
  background: #f0f0f0;
  padding-left: 11px;
  color: #999;
}

.nav-tools {
  height: 33px;
  margin-top: 1px;
  display: flex;
  align-items: center;
  gap: 5px;
  padding: 0 2px 0 11px;
  border-bottom: 2px solid #ececec;
}

.sparkle {
  width: 13px;
  height: 14px;
  margin-right: auto;
}

.nav-tool {
  width: 30px;
  height: 27px;
  border-radius: 4px;
  background: #c2d9f2;
  display: flex;
  align-items: center;
  justify-content: center;
}

.nav-tool svg {
  width: 20px;
  height: 20px;
}

.nav-tree {
  padding-top: 2px;
}

.nav-node,
.nav-leaf {
  height: 30px;
  display: flex;
  align-items: center;
}

.nav-node {
  padding-left: 15px;
}

.nav-leaf {
  padding-left: 55px;
  position: relative;
  z-index: 0;
}

.nav-leaf svg {
  width: 19px;
  height: 20px;
  margin-right: 8px;
}

.nav-leaf.selected:before {
  content: "";
  position: absolute;
  z-index: -1;
  left: 51px;
  top: 2px;
  width: 87px;
  height: 26px;
  background: #c2d9f2;
  border-radius: 3px;
}

.tri,
.tri-open {
  display: inline-block;
  flex: none;
}

.tri {
  margin-right: 9px;
  margin-left: 2px;
  border-left: 5px solid #8a8a8a;
  border-top: 4.500px solid transparent;
  border-bottom: 4.500px solid transparent;
}

.tri-open {
  margin-right: 6px;
  border-left: 4.500px solid transparent;
  border-right: 4.500px solid transparent;
  border-top: 5px solid #8a8a8a;
}

.padlock {
  width: 13px;
  height: 16px;
  margin-left: 3px;
}

.mid-panel {
  width: 349px;
  margin-left: 6px;
  flex: none;
  display: flex;
  flex-direction: column;
}

.list-panel {
  height: 331px;
  flex: none;
}

.panel-tabs {
  height: 28px;
  display: flex;
  border-bottom: 1px solid #e3e3e3;
  box-sizing: border-box;
}

.panel-tab {
  width: 81px;
  line-height: 27px;
  text-align: center;
  background: #dedede;
  color: #999;
  border: 1px solid #d4d4d4;
  border-bottom: none;
  box-sizing: border-box;
}

.panel-tab.active {
  background: #f0f0f0;
  color: #333;
  font-weight: bold;
}

.list-tools {
  height: 33px;
  background: #fff;
  margin-top: 1px;
  display: flex;
  align-items: center;
  padding-left: 4px;
  border-bottom: 2px solid #ececec;
}

.list-tools .ic {
  margin-right: 6px;
}

.tool-text {
  margin-right: 13px;
  white-space: nowrap;
}

.tool-caret {
  margin: 0 12px 0 -4px;
  transform: scale(.8);
}

.tool-more {
  margin-left: auto;
  margin-right: 3px;
  width: 12px;
  height: 30px;
  line-height: 27px;
  text-align: center;
  font-size: 13px;
  border-radius: 3px;
}

.list-search {
  height: 23px;
  background: #fff;
  display: flex;
  align-items: center;
  justify-content: space-between;
  padding: 0 7px 0 3px;
  color: #aaa;
  font-size: 14.500px;
  border-bottom: 2px solid #ececec;
}

.list-tree {
  height: 228px;
  padding-top: 1px;
  background: #fff;
  box-sizing: border-box;
}

.list-root {
  height: 30px;
  padding-left: 17px;
  display: flex;
  align-items: center;
}

.list-item {
  height: 30px;
  padding-left: 51px;
  display: flex;
  align-items: center;
}

.list-item span {
  padding: 0 4px;
  height: 26px;
  line-height: 26px;
  border-radius: 3px;
}

.list-item .on {
  background: #c2d9f2;
  width: 24px;
}

.prop-panel {
  flex: 1;
  min-height: 0;
  margin-top: 5px;
  display: flex;
  flex-direction: column;
}

.prop-body {
  flex: 1;
  min-height: 0;
  display: flex;
  overflow: hidden;
  background: #fff;
}

.prop-table {
  width: 327px;
  flex: none;
  margin-top: 1px;
  table-layout: fixed;
  border-collapse: collapse;
  align-self: flex-start;
}

.prop-table th,
.prop-table td {
  height: 24.150px;
  padding: 0 0 0 4px;
  border-right: 2px solid #e8e8e8;
  border-bottom: 2px solid #e8e8e8;
  font-weight: normal;
  white-space: nowrap;
  overflow: hidden;
}

.prop-table th {
  text-align: center;
  padding: 0;
}

.prop-table .num {
  width: 27px;
  padding: 0 4px 0 0;
  text-align: right;
  font-size: 15px;
  box-sizing: border-box;
}

.prop-table td.num {
  background: #f0f0f0;
}

.prop-table .name {
  width: 126px;
}

.prop-table td.link {
  color: #2b6fe6;
}

.rebar {
  font-size: 12.500px;
  font-weight: bold;
  position: relative;
  top: -3px;
}

.rebar.first {
  margin-left: 2px;
}

.prop-scroll {
  flex: 1;
  position: relative;
}

.prop-thumb {
  position: absolute;
  left: 8px;
  top: 18px;
  width: 10px;
  height: 205px;
  border-radius: 5px;
  background: #cfcfcf;
}

.splitter {
  width: 5px;
  flex: none;
  position: relative;
  background: #f0f0f0;
}

.splitter-grip {
  position: absolute;
  top: 333px;
  left: 0;
  width: 5px;
  height: 122px;
  background: #4f5862;
}

.splitter-grip:after {
  content: "";
  position: absolute;
  top: 122px;
  left: 0;
  width: 5px;
  height: 329px;
  background: #fff;
}

/* Canvas */
.canvas {
  flex: 1;
  position: relative;
  min-width: 0;
  background: #000;
}

.drawing {
  display: block;
  width: 100%;
  height: 100%;
}

.bubbles circle {
  fill: none;
  stroke: #0b8a0b;
  stroke-width: 1.200;
}

.bubbles text {
  fill: #f0f0f0;
  font-size: 22px;
  text-anchor: middle;
}

.beam-note {
  fill: #f2f2f2;
  font-size: 41px;
}

.beam-ghost {
  font-family: Roboto, sans-serif;
  font-weight: 100;
  font-size: 60px;
  fill: #0d7a7a;
}

.axis-y,
.axis-x {
  font-family: "Liberation Sans", sans-serif;
  font-size: 20px;
  text-anchor: middle;
}

.axis-y { fill: #00c000; }
.axis-x { fill: #e00000; }

.view-tools {
  position: absolute;
  top: 0;
  right: 0;
  width: 41px;
  height: 308px;
  background: #fff;
  display: flex;
  flex-direction: column;
  align-items: center;
  padding-top: 17px;
  box-sizing: border-box;
}

.view-ic {
  width: 27px;
  height: 26px;
  flex: none;
  margin-bottom: 11px;
  margin-right: 1px;
}

.view-caret {
  flex: none;
  margin: -3px 0 8px;
  border-left: 4px solid transparent;
  border-right: 4px solid transparent;
  border-top: 5px solid #555;
}

.view-caret.second {
  margin-bottom: 10px;
}

.view-sep {
  width: 26px;
  height: 1px;
  margin: -3px 0 6px;
  background: #666;
}

.view-scale {
  position: absolute;
  right: 0;
  top: 232px;
  width: 12px;
  height: 74px;
  border-radius: 4px 0 0 4px;
  background: repeating-linear-gradient(#56606a 0 2px, #8a949c 2px 3px);
  overflow: hidden;
}

.view-scale:after {
  content: "";
  position: absolute;
  left: 3px;
  right: 2px;
  top: 32px;
  height: 34px;
  background: repeating-linear-gradient(transparent 0 1px, rgba(0,0,0,.35) 1px 3px), linear-gradient(#d8e04a, #4dd8a8);
}

/* Status bar */
.status-bar {
  height: 39px;
  flex: none;
  background: #fdfdfd;
  display: flex;
  align-items: center;
  font-size: 15px;
  white-space: nowrap;
  position: relative;
  top: -1px;
}

.st-pos { width: 329px; padding-left: 2px; font-size: 16px; }
.st-floor { width: 104px; }
.st-elev { width: 167px; }
.st-count { width: 128px; }
.st-hide { width: 129px; }

.st-btn {
  width: 31px;
  height: 31px;
  margin-right: 4px;
  box-sizing: border-box;
  border: 1px solid #bdbdbd;
  border-radius: 4px;
  display: flex;
  align-items: center;
  padding-left: 5px;
  flex: none;
}

.st-btn svg {
  width: 20px;
  height: 20px;
  flex: none;
}

.st-btn.wide {
  width: 44px;
  margin-right: 5px;
}

.st-btn.on {
  background: #d6e6fa;
  border-color: #4a90e2;
}

.st-btn.dim {
  margin-left: 3px;
  margin-right: 8px;
}

.st-caret {
  margin-left: 7px;
  border-left: 3px solid transparent;
  border-right: 3px solid transparent;
  border-top: 4px solid #555;
}

.st-msg {
  margin-left: 4px;
}

/* Taskbar */
.taskbar {
  height: 10px;
  flex: none;
  position: relative;
  background: #1f2d30;
  overflow: hidden;
}

.task-active {
  position: absolute;
  left: 636px;
  top: 0;
  width: 61px;
  height: 10px;
  background: #4a5557;
}

.task-white {
  position: absolute;
  left: 998px;
  top: 7px;
  width: 287px;
  height: 3px;
  background: #fff;
}

.task-time {
  position: absolute;
  left: 1788px;
  top: 7px;
  font-size: 14px;
  color: #eee;
}

.task-edge {
  position: absolute;
  left: 1915px;
  top: 0;
  width: 1px;
  height: 10px;
  background: #8a9496;
}
```
